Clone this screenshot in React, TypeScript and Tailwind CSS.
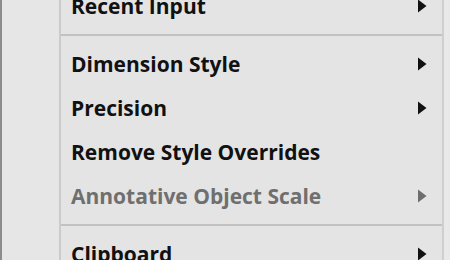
import React from "react";

function Arrow({ disabled }: { disabled?: boolean }) {
  return (
    <svg width="10" height="14" viewBox="0 0 10 14" className="shrink-0">
      <path d="M1 0.5 L9.5 7 L1 13.5 Z" fill={disabled ? "#6e6e6e" : "#111111"} />
    </svg>
  );
}

function Item({ label, sub, disabled }: { label: string; sub?: boolean; disabled?: boolean }) {
  return (
    <div className="flex h-[44px] shrink-0 items-center pl-[10px] pr-[15px]">
      <span
        className={
          "flex-1 whitespace-nowrap text-[21px] font-bold leading-none " +
          (disabled ? "text-[#6f6f6f]" : "text-[#111111]")
        }
      >
        {label}
      </span>
      {sub ? <Arrow disabled={disabled} /> : null}
    </div>
  );
}

function Sep() {
  return (
    <div className="flex h-[14px] shrink-0 items-center">
      <div className="h-[2px] w-full bg-[#c2c2c2]" />
    </div>
  );
}

export default function App() {
  return (
    <div
      className="h-[260px] w-[450px] overflow-hidden bg-[#e9e9e9]"
      style={{ fontFamily: '"Open Sans", "Noto Sans", sans-serif' }}
    >
      <div className="flex h-full w-[444px] border-l-[2px] border-r-[2px] border-l-[#8c8c8c] border-r-[#cfcfcf] bg-[#e4e4e4]">
        <div className="w-[59px] shrink-0 border-r-[2px] border-r-[#cbcbcb] bg-[#e6e6e6]" />
        <div className="-mt-[16px] flex flex-1 flex-col">
          <Item label="Recent Input" sub />
          <Sep />
          <Item label="Dimension Style" sub />
          <Item label="Precision" sub />
          <Item label="Remove Style Overrides" />
          <Item label="Annotative Object Scale" sub disabled />
          <Sep />
          <Item label="Clipboard" sub />
        </div>
      </div>
    </div>
  );
}
